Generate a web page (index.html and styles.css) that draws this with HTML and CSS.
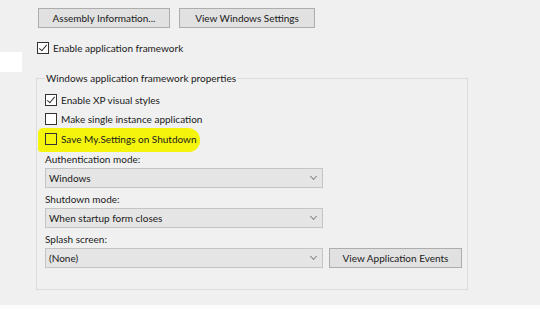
FILE: index.html
```html
<!DOCTYPE html>
<html lang="en">
  <head>
    <meta charset="UTF-8" />
    <title>Application</title>
    <link rel="stylesheet" href="styles.css">
  </head>
  <body>
    <div class="page">
      <div class="side">
        <div class="side_block"></div>
      </div>

      <div class="main">
        <div class="top_buttons">
          <button class="btn btn_assembly">Assembly Information...</button>
          <button class="btn btn_windows">View Windows Settings</button>
        </div>

        <label class="check_row framework_row">
          <span class="box checked"></span>
          <span>Enable application framework</span>
        </label>

        <fieldset class="group">
          <legend class="group_title">Windows application framework properties</legend>

          <label class="check_row">
            <span class="box checked"></span>
            <span>Enable XP visual styles</span>
          </label>
          <label class="check_row">
            <span class="box"></span>
            <span>Make single instance application</span>
          </label>
          <label class="check_row highlighted">
            <span class="marker"></span>
            <span class="box"></span>
            <span>Save My.Settings on Shutdown</span>
          </label>

          <div class="field_label">Authentication mode:</div>
          <div class="combo">
            <span>Windows</span>
            <span class="arrow"></span>
          </div>

          <div class="field_label">Shutdown mode:</div>
          <div class="combo">
            <span>When startup form closes</span>
            <span class="arrow"></span>
          </div>

          <div class="field_label">Splash screen:</div>
          <div class="combo_row">
            <div class="combo">
              <span>(None)</span>
              <span class="arrow"></span>
            </div>
            <button class="btn btn_events">View Application Events</button>
          </div>
        </fieldset>
      </div>
    </div>
    <div class="bottom_strip"></div>
  </body>
</html>
```

FILE: styles.css
```css
html {
  background: #f0f0f0;
}
body {
  margin: 0;
  background: #f0f0f0;
  font-family: "Lato", sans-serif;
  font-size: 10px;
  color: #1a1a1a;
}
.page {
  display: flex;
  height: 305px;
}
.side {
  width: 22px;
}
.side_block {
  margin-top: 52px;
  height: 20px;
  background: #fff;
}
.main {
  padding-left: 16px;
  padding-top: 8px;
}
.top_buttons {
  display: flex;
  gap: 9px;
}
.btn {
  height: 20px;
  border: 1px solid #adadad;
  background: #e1e1e1;
  font-family: inherit;
  font-size: 10px;
  color: #1a1a1a;
  padding: 0;
}
.btn_assembly {
  width: 132px;
}
.btn_windows {
  width: 136px;
}
.check_row {
  position: relative;
  display: flex;
  align-items: center;
  height: 20px;
  gap: 4px;
}
.framework_row {
  margin-top: 10px;
  margin-left: -1px;
}
.box {
  position: relative;
  width: 12px;
  height: 12px;
  border: 1px solid #333;
  background: #fff;
  box-sizing: border-box;
  flex: none;
}
.box.checked::after {
  content: "";
  position: absolute;
  left: 3px;
  top: 0px;
  width: 3px;
  height: 7px;
  border: solid #333;
  border-width: 0 1px 1px 0;
  transform: rotate(40deg);
}
.highlighted .box {
  background: transparent;
}
.marker {
  position: absolute;
  left: -7px;
  top: -1px;
  width: 162px;
  height: 24px;
  background: #f4f40c;
  border-radius: 5px 12px 11px 3px;
  z-index: -1;
}
.group {
  margin: 14px 0 0 -2px;
  width: 432px;
  height: 218px;
  border: 1px solid #dcdcdc;
  padding: 6px 0 0 8px;
  box-sizing: border-box;
  position: relative;
  z-index: 0;
}
.group_title {
  padding: 0 1px;
  margin-left: 0;
}
.group .check_row {
  height: 19.5px;
}
.field_label {
  height: 17px;
  line-height: 17px;
  margin-top: 2px;
}
.combo {
  display: flex;
  align-items: center;
  justify-content: space-between;
  width: 278px;
  height: 20px;
  border: 1px solid #c4c4c4;
  background: #e5e5e5;
  box-sizing: border-box;
  padding: 0 6px 0 3px;
  margin-bottom: 3px;
}
.arrow {
  width: 4px;
  height: 4px;
  border: solid #888;
  border-width: 0 1px 1px 0;
  transform: rotate(45deg);
  margin-top: -3px;
}
.combo_row {
  display: flex;
  gap: 6px;
}
.btn_events {
  width: 133px;
}
.bottom_strip {
  height: 4px;
  background: #fcfcfc;
}
```
